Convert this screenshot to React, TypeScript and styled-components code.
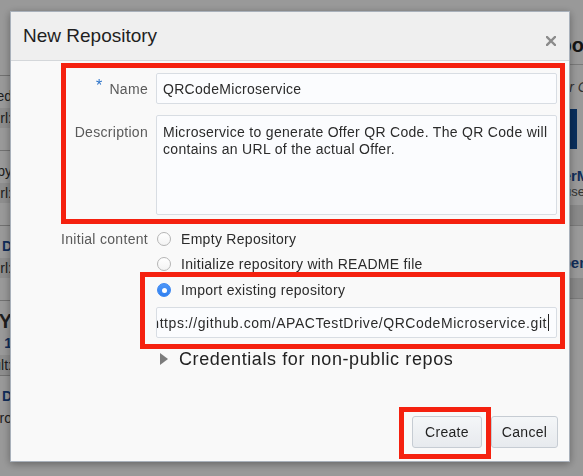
import React from "react";
import styled, { createGlobalStyle } from "styled-components";

const Global = createGlobalStyle`
  html, body { margin: 0; padding: 0; }
  body {
    width: 583px;
    height: 476px;
    overflow: hidden;
    font-family: "Liberation Sans", Arial, sans-serif;
    background: #ffffff;
  }
`;

/* ---------- background page (dimmed) ---------- */
const Page = styled.div`
  display: flex;
  width: 583px;
  height: 476px;
  background: #fff;
  overflow: hidden;
`;

const LeftList = styled.div`
  width: 12px;
  flex: none;
  display: flex;
  flex-direction: column;
  padding-top: 75px;
  overflow: hidden;
`;

const ListItem = styled.div`
  border-top: 1px solid #bdbdbd;
  height: 75px;
  display: flex;
  flex-direction: column;
  padding-top: 10px;
  box-sizing: border-box;
`;

const Clip = styled.div<{ $bold?: boolean; $blue?: boolean; $size?: number; $band?: boolean }>`
  display: flex;
  justify-content: flex-end;
  white-space: nowrap;
  font-size: ${(p) => p.$size ?? 14}px;
  line-height: 20px;
  font-weight: ${(p) => (p.$bold ? 700 : 400)};
  color: ${(p) => (p.$blue ? "#1d4c94" : "#333")};
  background: ${(p) => (p.$band ? "#ececec" : "transparent")};
  margin-bottom: ${(p) => (p.$band ? 0 : 2)}px;
`;

const Spacer = styled.div`
  flex: 1;
`;

const RightCol = styled.div`
  width: 53px;
  flex: none;
  padding-top: 32px;
  overflow: hidden;
  display: flex;
  flex-direction: column;
  white-space: nowrap;
`;

const RLine = styled.div<{ $indent: number }>`
  padding-left: ${(p) => p.$indent}px;
`;

const RHeading = styled(RLine)`
  font-size: 20px;
  line-height: 26px;
  font-weight: 700;
  color: #222;
  border-bottom: 1px solid #ccc;
  padding-bottom: 6px;
`;

const RSub = styled(RLine)`
  font-size: 14px;
  font-style: italic;
  color: #555;
  line-height: 20px;
  margin-top: 12px;
`;

const RBlueBar = styled.div`
  height: 40px;
  width: 47px;
  background: #0f4d9a;
  margin-top: 12px;
`;

const RCardTitle = styled(RLine)`
  font-size: 15px;
  line-height: 18px;
  font-weight: 700;
  color: #1d4c94;
  margin-top: 18px;
`;

const RCardText = styled(RLine)`
  font-size: 13px;
  line-height: 14px;
  color: #555;
`;

const RBand = styled.div`
  height: 20px;
  background: #e4e4e4;
  margin-top: 6px;
  border-bottom: 1px solid #ccc;
  margin-bottom: 10px;
`;

const Overlay = styled.div`
  position: fixed;
  inset: 0;
  background: rgba(0, 0, 0, 0.4);
`;

/* ---------- dialog ---------- */
const Dialog = styled.div`
  position: fixed;
  left: 10px;
  top: 11px;
  width: 560px;
  height: 451px;
  box-sizing: border-box;
  border: 1px solid #a9b1bb;
  background: #f9f9f9;
  box-shadow: 0 2px 8px rgba(0, 0, 0, 0.35);
  display: flex;
  flex-direction: column;
  color: #333;
  letter-spacing: 0.3px;
`;

const Header = styled.div`
  height: 48px;
  flex: none;
  background: #efefef;
  border-bottom: 1px solid #d4d7da;
  display: flex;
  align-items: center;
  padding: 0 12px 0 12px;
`;

const Title = styled.h1`
  margin: 0 0 1px 0;
  font-size: 19px;
  font-weight: 400;
  letter-spacing: 0;
  color: #1f1f1f;
  flex: 1;
`;

const CloseButton = styled.button`
  border: 0;
  background: transparent;
  padding: 0;
  width: 10px;
  height: 10px;
  margin-top: 9px;
  margin-right: 1px;
  display: flex;
  cursor: pointer;
`;

const Body = styled.div`
  flex: 1;
  min-width: 0;
  padding: 12px 12px 0 0;
  display: flex;
  flex-direction: column;
`;

const Highlight = styled.div<{ $t: number; $l: number; $r: number; $b: number }>`
  position: relative;
  min-width: 0;
  &::after {
    content: "";
    position: absolute;
    top: ${(p) => p.$t}px;
    left: ${(p) => p.$l}px;
    right: ${(p) => p.$r}px;
    bottom: ${(p) => p.$b}px;
    border: 5px solid #f5210f;
    pointer-events: none;
    z-index: 2;
  }
`;

const FieldGroup = styled.div`
  display: flex;
  flex-direction: column;
  gap: 11px;
`;

const FieldRow = styled.div<{ $top?: boolean; $mt?: number }>`
  display: grid;
  grid-template-columns: 137px minmax(0, 1fr);
  column-gap: 8px;
  align-items: ${(p) => (p.$top ? "start" : "center")};
  margin-top: ${(p) => p.$mt ?? 0}px;
`;

const Label = styled.label<{ $pad?: number }>`
  text-align: right;
  font-size: 14px;
  line-height: 20px;
  color: #5a5a5a;
  padding-top: ${(p) => p.$pad ?? 0}px;
`;

const Req = styled.span`
  color: #2a72c9;
  font-size: 16px;
  margin-right: 7px;
  position: relative;
  top: -3px;
`;

const TextInput = styled.input`
  height: 31px;
  box-sizing: border-box;
  border: 1px solid #d8dde3;
  border-radius: 2px;
  background: #fbfcfe;
  padding: 0 6px;
  font-family: inherit;
  font-size: 14px;
  letter-spacing: 0.3px;
  color: #2b2b2b;
  outline: none;
  min-width: 0;
`;

const TextArea = styled.textarea`
  height: 100px;
  box-sizing: border-box;
  border: 1px solid #d8dde3;
  border-radius: 2px;
  background: #fbfcfe;
  padding: 8px 6px;
  font-family: inherit;
  font-size: 14px;
  letter-spacing: 0.3px;
  line-height: 17px;
  color: #2b2b2b;
  resize: none;
  outline: none;
  min-width: 0;
`;

const Options = styled.div`
  display: flex;
  flex-direction: column;
  min-width: 0;
`;

const Option = styled.label<{ $gap?: number }>`
  display: flex;
  align-items: center;
  gap: 10px;
  height: 20px;
  font-size: 14px;
  color: #2b2b2b;
  margin-bottom: ${(p) => p.$gap ?? 5}px;
  padding-left: 1px;
`;

const RadioDot = styled.span<{ $checked?: boolean }>`
  width: 14px;
  height: 14px;
  box-sizing: border-box;
  border-radius: 50%;
  flex: none;
  display: flex;
  align-items: center;
  justify-content: center;
  border: 1px solid ${(p) => (p.$checked ? "#3a86f0" : "#b4b4b4")};
  background: ${(p) => (p.$checked ? "linear-gradient(#4e97f8, #2f7ff0)" : "linear-gradient(#ffffff, #f3f3f3)")};
  &::after {
    content: "";
    display: ${(p) => (p.$checked ? "block" : "none")};
    width: 5px;
    height: 5px;
    border-radius: 50%;
    background: #fff;
  }
`;

const ImportGroup = styled.div`
  display: flex;
  flex-direction: column;
  min-width: 0;
`;

const UrlField = styled.div`
  height: 31px;
  box-sizing: border-box;
  border: 1px solid #d8dde3;
  border-radius: 2px;
  background: #fbfcfe;
  display: flex;
  align-items: center;
  justify-content: flex-end;
  overflow: hidden;
  white-space: nowrap;
  padding: 0 7px 0 2px;
  font-size: 14px;
  letter-spacing: 0.55px;
  color: #2b2b2b;
  margin-top: 2px;
  min-width: 0;
`;

const UrlText = styled.span`
  flex: none;
`;

const Caret = styled.span`
  display: inline-block;
  width: 1px;
  height: 17px;
  background: #222;
  margin-left: 1px;
  flex: none;
`;

const Disclosure = styled.div`
  display: flex;
  align-items: center;
  gap: 11px;
  margin-top: 10px;
  padding-left: 4px;
  font-size: 18px;
  letter-spacing: 0.6px;
  line-height: 22px;
  color: #222;
`;

const Triangle = styled.span`
  width: 0;
  height: 0;
  border-top: 6px solid transparent;
  border-bottom: 6px solid transparent;
  border-left: 8px solid #7c7c7c;
`;

const Footer = styled.div`
  display: flex;
  justify-content: flex-end;
  gap: 9px;
  padding: 0 11px 13px 0;
`;

const Button = styled.button<{ $w: number }>`
  width: ${(p) => p.$w}px;
  height: 32px;
  border: 1px solid #c6ccd3;
  border-radius: 3px;
  background: linear-gradient(#f4f6f8, #e7eaee);
  font-family: inherit;
  font-size: 14px;
  letter-spacing: 0.3px;
  color: #1f1f1f;
  padding: 0;
  cursor: pointer;
`;

export default function App() {
  return (
    <>
      <Global />
      <Page>
        <LeftList>
          <ListItem>
            <Clip>Last updated</Clip>
            <Clip $band>Git Url:</Clip>
          </ListItem>
          <ListItem>
            <Clip>Copy</Clip>
            <Clip $band>Git Url:</Clip>
          </ListItem>
          <ListItem>
            <Clip $bold $blue>D</Clip>
            <Clip $band>Git Url:</Clip>
          </ListItem>
          <ListItem>
            <Clip $bold $size={20}>MY</Clip>
            <Clip $bold $blue>1</Clip>
            <Clip $band>Result:</Clip>
          </ListItem>
          <ListItem>
            <Clip $bold $blue>D</Clip>
            <Clip>Pro</Clip>
          </ListItem>
        </LeftList>
        <Spacer />
        <RightCol>
          <RHeading $indent={4}>Repositories</RHeading>
          <RSub $indent={15}>Your Code</RSub>
          <RBlueBar />
          <RCardTitle $indent={11}>OfferMicroservice</RCardTitle>
          <RCardText $indent={34}>user</RCardText>
          <RBand />
          <RCardTitle $indent={20}>Open</RCardTitle>
          <RBand />
        </RightCol>
      </Page>
      <Overlay />
      <Dialog role="dialog" aria-label="New Repository">
        <Header>
          <Title>New Repository</Title>
          <CloseButton aria-label="Close">
            <svg width="10" height="10" viewBox="0 0 10 10">
              <path d="M1 1 L9 9 M9 1 L1 9" stroke="#8b8b8b" strokeWidth="2.4" strokeLinecap="square" />
            </svg>
          </CloseButton>
        </Header>
        <Body>
          <Highlight $t={-10} $l={50} $r={-8} $b={-9}>
            <FieldGroup>
              <FieldRow>
                <Label>
                  <Req>*</Req>Name
                </Label>
                <TextInput readOnly value="QRCodeMicroservice" />
              </FieldRow>
              <FieldRow $top>
                <Label $pad={7}>Description</Label>
                <TextArea
                  readOnly
                  value="Microservice to generate Offer QR Code. The QR Code will contains an URL of the actual Offer."
                />
              </FieldRow>
            </FieldGroup>
          </Highlight>
          <FieldRow $top $mt={14}>
            <Label>Initial content</Label>
            <Options>
              <Option>
                <RadioDot />
                Empty Repository
              </Option>
              <Option $gap={6}>
                <RadioDot />
                Initialize repository with README file
              </Option>
              <Highlight $t={-8} $l={-16} $r={-8} $b={-11}>
                <ImportGroup>
                  <Option $gap={5}>
                    <RadioDot $checked />
                    Import existing repository
                  </Option>
                  <UrlField>
                    <UrlText>https://github.com/APACTestDrive/QRCodeMicroservice.git</UrlText>
                    <Caret />
                  </UrlField>
                </ImportGroup>
              </Highlight>
              <Disclosure>
                <Triangle />
                Credentials for non-public repos
              </Disclosure>
            </Options>
          </FieldRow>
        </Body>
        <Footer>
          <Highlight $t={-9} $l={-13} $r={-9} $b={-11}>
            <Button $w={70}>Create</Button>
          </Highlight>
          <Button $w={67}>Cancel</Button>
        </Footer>
      </Dialog>
    </>
  );
}
